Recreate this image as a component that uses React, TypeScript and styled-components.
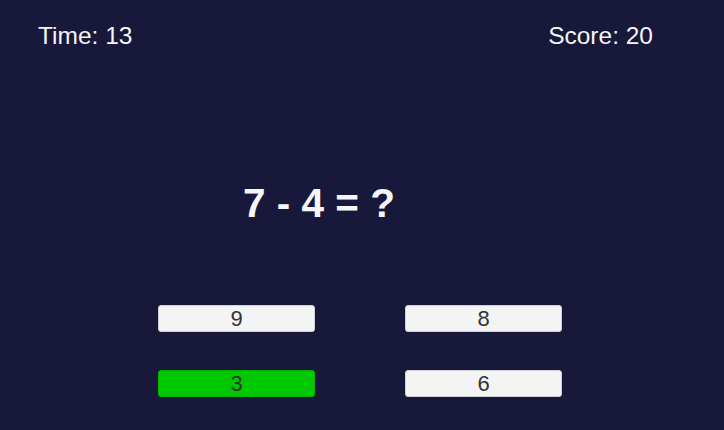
import React from "react";
import styled, { createGlobalStyle } from "styled-components";

const Global = createGlobalStyle`
  html, body { margin: 0; padding: 0; background: #18183a; }
  * { box-sizing: border-box; }
`;

const Screen = styled.div`
  width: 724px;
  height: 430px;
  background: #18183a;
  font-family: "Liberation Sans", Arial, sans-serif;
  display: flex;
  flex-direction: column;
  overflow: hidden;
`;

const Header = styled.div`
  display: flex;
  justify-content: space-between;
  padding: 21px 71px 0 38px;
`;

const Stat = styled.div`
  color: #f4f4f8;
  font-size: 24.5px;
  line-height: 29px;
`;

const Question = styled.div`
  margin-top: 130px;
  padding-right: 86px;
  text-align: center;
  color: #f6f6f8;
  font-size: 40.5px;
  font-weight: 700;
  line-height: 46px;
  white-space: pre;
`;

const Answers = styled.div`
  margin-top: 79px;
  padding-left: 158px;
  display: grid;
  grid-template-columns: 157px 157px;
  column-gap: 90px;
  row-gap: 38px;
`;

const Answer = styled.button<{ $correct?: boolean }>`
  height: 27px;
  padding: 0;
  border: 1px solid ${(p) => (p.$correct ? "#00b400" : "#cfcfd4")};
  border-radius: 3px;
  background: ${(p) => (p.$correct ? "#00c800" : "#f4f4f4")};
  color: #333333;
  font-family: "Liberation Sans", Arial, sans-serif;
  font-size: 22px;
  line-height: 25px;
  text-align: center;
`;

const answers = [
  { v: "9" },
  { v: "8" },
  { v: "3", correct: true },
  { v: "6" },
];

export default function App() {
  return (
    <>
      <Global />
      <Screen>
        <Header>
          <Stat>Time: 13</Stat>
          <Stat>Score: 20</Stat>
        </Header>
        <Question>7 - 4 = ?</Question>
        <Answers>
          {answers.map((a) => (
            <Answer key={a.v} $correct={a.correct}>
              {a.v}
            </Answer>
          ))}
        </Answers>
      </Screen>
    </>
  );
}
